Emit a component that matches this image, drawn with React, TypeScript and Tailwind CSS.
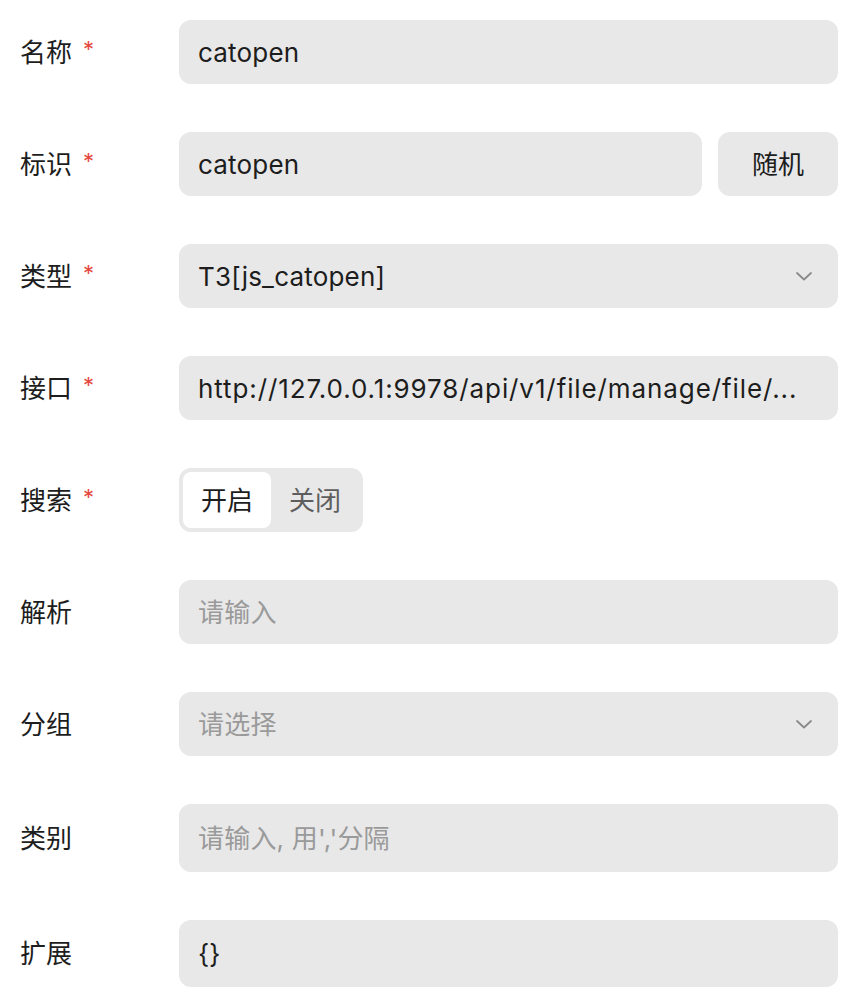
import React from "react";

const font = { fontFamily: "Inter, 'Noto Sans CJK SC', sans-serif" };

function Chevron() {
  return (
    <svg width="20" height="20" viewBox="0 0 20 20" fill="none" className="shrink-0 text-[#8a8a8a]">
      <path d="M3 7 L10 13.5 L17 7" stroke="currentColor" strokeWidth="1.8" strokeLinecap="round" strokeLinejoin="round" />
    </svg>
  );
}

function Label({ text, required }: { text: string; required?: boolean }) {
  return (
    <div className="w-[159px] shrink-0 flex items-center text-[26px] text-[#1d1d1d]">
      <span>{text}</span>
      {required && <span className="ml-[11px] text-[#e5483f] text-[22px] leading-none -mt-[6px]">*</span>}
    </div>
  );
}

function Field({
  value,
  placeholder,
  select,
  h = "h-[64px]",
  track = "tracking-[0.2px]",
}: {
  value?: string;
  placeholder?: string;
  select?: boolean;
  h?: string;
  track?: string;
}) {
  return (
    <div className={`flex-1 min-w-0 ${h} rounded-[12px] bg-[#e8e8e8] flex items-center pl-[19px] pr-[24px] gap-4`}>
      <span
        className={`flex-1 min-w-0 whitespace-nowrap text-[26px] ${track} ${
          value ? "text-[#1d1d1d]" : "text-[#9a9a9a]"
        }`}
      >
        {value || placeholder}
      </span>
      {select && <Chevron />}
    </div>
  );
}

export default function App() {
  return (
    <div style={font} className="w-[842px] bg-white pl-[20px] pr-[4px] pt-[20px] flex flex-col gap-[48px]">
      <div className="flex">
        <Label text="名称" required />
        <Field value="catopen" />
      </div>
      <div className="flex">
        <Label text="标识" required />
        <div className="flex-1 flex gap-[16px]">
          <Field value="catopen" />
          <button className="w-[120px] h-[64px] rounded-[12px] bg-[#e8e8e8] text-[26px] text-[#1d1d1d]">随机</button>
        </div>
      </div>
      <div className="flex">
        <Label text="类型" required />
        <Field value="T3[js_catopen]" select />
      </div>
      <div className="flex">
        <Label text="接口" required />
        <Field value="http://127.0.0.1:9978/api/v1/file/manage/file/..." track="tracking-[0.9px]" />
      </div>
      <div className="flex">
        <Label text="搜索" required />
        <div className="h-[64px] rounded-[12px] bg-[#e8e8e8] p-[4px] flex">
          <div className="w-[88px] rounded-[8px] bg-white flex items-center justify-center text-[26px] text-[#1d1d1d]">开启</div>
          <div className="w-[88px] flex items-center justify-center text-[26px] text-[#5e5e5e]">关闭</div>
        </div>
      </div>
      <div className="flex">
        <Label text="解析" />
        <Field placeholder="请输入" />
      </div>
      <div className="flex">
        <Label text="分组" />
        <Field placeholder="请选择" select />
      </div>
      <div className="flex">
        <Label text="类别" />
        <Field placeholder="请输入, 用','分隔" h="h-[68px]" />
      </div>
      <div className="flex">
        <Label text="扩展" />
        <Field value="{}" h="h-[67px]" />
      </div>
    </div>
  );
}
